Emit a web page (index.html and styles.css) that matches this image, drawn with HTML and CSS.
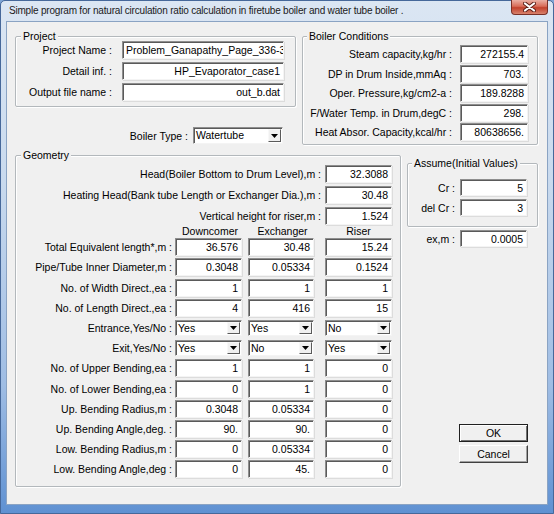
FILE: index.html
```html
<!DOCTYPE html>
<html>
<head>
<meta charset="utf-8">
<title>Natural circulation ratio</title>
<link rel="stylesheet" href="styles.css">
</head>
<body>
<div class="window">
  <div class="titlebar">
    <span class="title">Simple program for natural circulation ratio calculation in firetube boiler and water tube boiler .</span>
    <div class="close">
      <svg width="13" height="10" viewBox="0 0 13 10"><path d="M2 1.5L11 8.5M11 1.5L2 8.5" stroke="#5a2018" stroke-width="4" stroke-linecap="round"/><path d="M2 1.5L11 8.5M11 1.5L2 8.5" stroke="#fff" stroke-width="2.2" stroke-linecap="round"/></svg>
    </div>
  </div>
  <div class="client">
    <div class="top">
      <div class="leftcol">
        <div class="group project">
          <span class="legend">Project</span>
          <div class="form proj-form">
            <span class="lbl">Project Name :</span><div class="field lefttext">Problem_Ganapathy_Page_336-340</div>
            <span class="lbl">Detail inf. :</span><div class="field">HP_Evaporator_case1</div>
            <span class="lbl">Output file name :</span><div class="field">out_b.dat</div>
          </div>
        </div>
        <div class="btype">
          <span class="lbl">Boiler Type :</span>
          <div class="combo wide"><span class="val">Watertube</span><span class="drop"><svg width="7" height="4" viewBox="0 0 7 4"><path d="M0 0h7L3.5 4z" fill="#000"/></svg></span></div>
        </div>
      </div>
      <div class="group conditions">
        <span class="legend">Boiler Conditions</span>
        <div class="form cond-form">
          <span class="lbl">Steam capacity,kg/hr :</span><div class="field">272155.4</div>
          <span class="lbl">DP in Drum Inside,mmAq :</span><div class="field">703.</div>
          <span class="lbl">Oper. Pressure,kg/cm2-a :</span><div class="field">189.8288</div>
          <span class="lbl">F/Water Temp. in Drum,degC :</span><div class="field">298.</div>
          <span class="lbl">Heat Absor. Capacity,kcal/hr :</span><div class="field">80638656.</div>
        </div>
      </div>
    </div>
    <div class="bottom">
      <div class="group geometry">
        <span class="legend">Geometry</span>
        <div class="form heads">
          <span class="lbl">Head(Boiler Bottom to Drum Level),m :</span><div class="field">32.3088</div>
          <span class="lbl">Heating Head(Bank tube Length or Exchanger Dia.),m :</span><div class="field">30.48</div>
          <span class="lbl">Vertical height for riser,m :</span><div class="field">1.524</div>
        </div>
        <div class="table">
          <span></span><span class="hdr">Downcomer</span><span class="hdr">Exchanger</span><span class="hdr c3">Riser</span>

          <span class="lbl">Total Equivalent length*,m :</span><div class="field">36.576</div><div class="field">30.48</div><div class="field c3">15.24</div>
          <span class="lbl">Pipe/Tube Inner Diameter,m :</span><div class="field">0.3048</div><div class="field">0.05334</div><div class="field c3">0.1524</div>
          <span class="lbl">No. of Width Direct.,ea :</span><div class="field">1</div><div class="field">1</div><div class="field c3">1</div>
          <span class="lbl">No. of Length Direct.,ea :</span><div class="field">4</div><div class="field">416</div><div class="field c3">15</div>

          <span class="lbl">Entrance,Yes/No :</span>
          <div class="combo"><span class="val">Yes</span><span class="drop"><svg width="7" height="4" viewBox="0 0 7 4"><path d="M0 0h7L3.5 4z" fill="#000"/></svg></span></div>
          <div class="combo"><span class="val">Yes</span><span class="drop"><svg width="7" height="4" viewBox="0 0 7 4"><path d="M0 0h7L3.5 4z" fill="#000"/></svg></span></div>
          <div class="combo c3"><span class="val">No</span><span class="drop"><svg width="7" height="4" viewBox="0 0 7 4"><path d="M0 0h7L3.5 4z" fill="#000"/></svg></span></div>

          <span class="lbl">Exit,Yes/No :</span>
          <div class="combo"><span class="val">Yes</span><span class="drop"><svg width="7" height="4" viewBox="0 0 7 4"><path d="M0 0h7L3.5 4z" fill="#000"/></svg></span></div>
          <div class="combo"><span class="val">No</span><span class="drop"><svg width="7" height="4" viewBox="0 0 7 4"><path d="M0 0h7L3.5 4z" fill="#000"/></svg></span></div>
          <div class="combo c3"><span class="val">Yes</span><span class="drop"><svg width="7" height="4" viewBox="0 0 7 4"><path d="M0 0h7L3.5 4z" fill="#000"/></svg></span></div>

          <span class="lbl">No. of Upper Bending,ea :</span><div class="field">1</div><div class="field">1</div><div class="field c3">0</div>
          <span class="lbl">No. of Lower Bending,ea :</span><div class="field">0</div><div class="field">1</div><div class="field c3">0</div>
          <span class="lbl">Up. Bending Radius,m :</span><div class="field">0.3048</div><div class="field">0.05334</div><div class="field c3">0</div>
          <span class="lbl">Up. Bending Angle,deg. :</span><div class="field">90.</div><div class="field">90.</div><div class="field c3">0</div>
          <span class="lbl">Low. Bending Radius,m :</span><div class="field">0</div><div class="field">0.05334</div><div class="field c3">0</div>
          <span class="lbl">Low. Bending Angle,deg :</span><div class="field">0</div><div class="field">45.</div><div class="field c3">0</div>
        </div>
      </div>
      <div class="rightcol">
        <div class="group assume">
          <span class="legend">Assume(Initial Values)</span>
          <div class="form small-form">
            <span class="lbl">Cr :</span><div class="field sm">5</div>
            <span class="lbl">del Cr :</span><div class="field sm">3</div>
          </div>
        </div>
        <div class="form exrow">
          <span class="lbl">ex,m :</span><div class="field sm">0.0005</div>
        </div>
        <div class="buttons">
          <button class="btn default">OK</button>
          <button class="btn">Cancel</button>
        </div>
      </div>
    </div>
  </div>
</div>
</body>
</html>
```
FILE: styles.css
```css
html, body {
  margin: 0;
  padding: 0;
  background: #7fa6d6;
}
body {
  font-family: "Liberation Sans", Arial, sans-serif;
  font-size: 10.5px;
  color: #000;
}
.window {
  width: 554px;
  height: 514px;
  box-sizing: border-box;
  border: 1px solid #46689a;
  border-radius: 5px 5px 0 0;
  background: linear-gradient(#dbe6f3 0%, #c9daee 35%, #9fbde4 75%, #5f91d2 100%);
  padding: 0 5px 8px 5px;
  display: flex;
  flex-direction: column;
}
.titlebar {
  height: 20px;
  display: flex;
  align-items: flex-start;
}
.title {
  font-size: 10px;
  letter-spacing: -0.2px;
  padding: 4px 0 0 3px;
  color: #1a1a1a;
  white-space: nowrap;
}
.close {
  margin-left: auto;
  margin-top: -1px;
  width: 37px;
  height: 15px;
  box-sizing: border-box;
  border: 1px solid #7a3026;
  border-top: none;
  border-radius: 0 0 4px 4px;
  background: linear-gradient(#eab0a4 0%, #d86c58 45%, #c2412c 55%, #d8826c 100%);
  display: flex;
  align-items: center;
  justify-content: center;
}
.client {
  flex: 1;
  background: #f0f0f0;
  border: 1px solid #8aa3c3;
  padding: 14px 8px 0 8px;
}
.top {
  display: flex;
  gap: 6px;
}
.leftcol {
  width: 281px;
}
.group {
  position: relative;
  box-sizing: border-box;
  border: 1px solid #b3b8bc;
  border-radius: 2px;
  box-shadow: inset 1px 1px 0 #fff, 1px 1px 0 #fff;
}
.legend {
  position: absolute;
  top: -7px;
  left: 5px;
  padding: 0 2px;
  line-height: 12px;
  background: #f0f0f0;
  white-space: nowrap;
}
.conditions .legend { left: 4px; }
.assume .legend { left: 4px; }

.form {
  display: grid;
  align-items: center;
}
.lbl {
  text-align: right;
  white-space: nowrap;
}
.field {
  height: 18px;
  box-sizing: border-box;
  background: #fff;
  border-top: 1px solid #8e8e8e;
  border-left: 1px solid #8e8e8e;
  border-right: 1px solid #f4f4f4;
  border-bottom: 1px solid #f4f4f4;
  box-shadow: inset 1px 1px 0 #5a5a5a, 1px 1px 0 #dcdcdc;
  text-align: right;
  padding: 2px 3px 0 3px;
  line-height: 12px;
  white-space: nowrap;
  overflow: hidden;
}
.field.lefttext { text-align: left; text-overflow: clip; }
.field.sm { height: 17px; }

.project {
  height: 71px;
  padding: 4px 11px 0 0;
}
.proj-form {
  grid-template-columns: 1fr 162px;
  column-gap: 10px;
  row-gap: 3px;
}
.btype {
  margin-top: 20px;
  padding-right: 13px;
  display: flex;
  justify-content: flex-end;
  align-items: center;
  gap: 5px;
}

.combo {
  height: 16px;
  box-sizing: border-box;
  background: #fff;
  border-top: 1px solid #8e8e8e;
  border-left: 1px solid #8e8e8e;
  border-right: 1px solid #f4f4f4;
  border-bottom: 1px solid #f4f4f4;
  box-shadow: inset 1px 1px 0 #5a5a5a;
  display: flex;
  align-items: stretch;
}
.combo.wide { width: 90px; height: 17px; }
.combo .val {
  flex: 1;
  padding: 1px 0 0 2px;
  line-height: 12px;
}
.combo .drop {
  width: 13px;
  margin: 1px 1px 1px 0;
  box-sizing: border-box;
  background: #f0f0f0;
  border-top: 1px solid #f8f8f8;
  border-left: 1px solid #f8f8f8;
  border-right: 1px solid #5a5a5a;
  border-bottom: 1px solid #5a5a5a;
  display: flex;
  align-items: center;
  justify-content: center;
}

.conditions {
  width: 236px;
  height: 109px;
  padding: 8px 9px 0 0;
}
.cond-form {
  grid-template-columns: 1fr 68px;
  column-gap: 8px;
  row-gap: 1.5px;
}

.bottom {
  margin-top: 10px;
  display: flex;
  gap: 6px;
}
.geometry {
  width: 386px;
  height: 332px;
  padding: 9px 8px 0 0;
}
.heads {
  grid-template-columns: 1fr 67px;
  column-gap: 4px;
  row-gap: 3px;
}
.table {
  margin-top: 1px;
  display: grid;
  grid-template-columns: 1fr 67px 66px 72px;
  grid-template-rows: 10px;
  grid-auto-rows: 18px;
  column-gap: 6px;
  row-gap: 2.2px;
  align-items: center;
}
.table .lbl { margin-right: -3px; }
.table .c3 { justify-self: end; width: 67px; }
.hdr {
  text-align: center;
  line-height: 10px;
  padding-left: 3px;
}

.rightcol {
  width: 131px;
  display: flex;
  flex-direction: column;
}
.assume {
  margin-top: 8px;
  height: 64px;
  padding: 15px 10px 0 0;
}
.small-form {
  grid-template-columns: 1fr 67px;
  column-gap: 5px;
  row-gap: 3px;
}
.exrow {
  margin-top: 3px;
  padding-right: 11px;
  grid-template-columns: 1fr 67px;
  column-gap: 5px;
}
.buttons {
  margin-top: auto;
  margin-bottom: 24px;
  padding-right: 10px;
  display: flex;
  flex-direction: column;
  align-items: flex-end;
  gap: 3px;
}
.btn {
  width: 69px;
  height: 18px;
  box-sizing: border-box;
  padding: 0;
  font: inherit;
  color: #000;
  background: #f0f0f0;
  border: 1px solid;
  border-color: #fff #404040 #404040 #fff;
  box-shadow: inset -1px -1px 0 #a0a0a0;
}
.btn.default {
  border-color: #202020;
  box-shadow: inset 1px 1px 0 #fff, inset -1px -1px 0 #707070;
}
```
